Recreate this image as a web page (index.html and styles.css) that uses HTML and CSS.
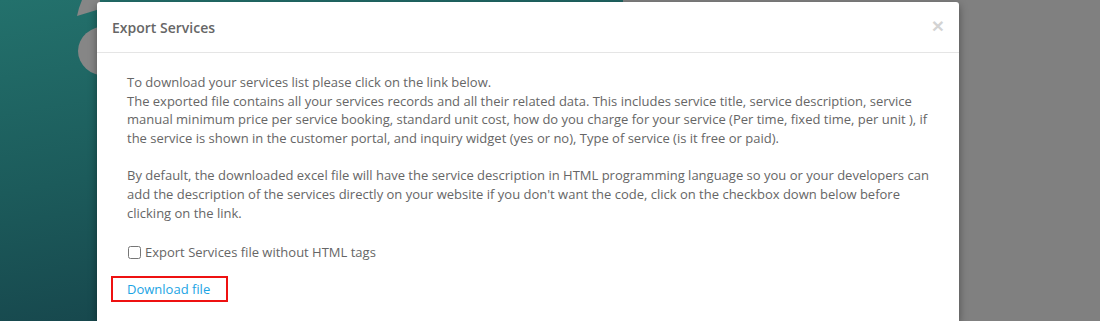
FILE: index.html
```html
<!DOCTYPE html>
<html lang="en">
<head>
    <meta charset="UTF-8">
    <meta name="viewport" content="width=device-width, initial-scale=1.0">
    <title>Export Services</title>
    <link rel="stylesheet" href="styles.css">
</head>
<body>
    <div class="backdrop">
        <div class="side-panel">
            <span class="blob blob-top"></span>
            <span class="blob blob-round"></span>
        </div>
    </div>

    <div class="modal">
        <div class="modal-header">
            <h4 class="modal-title">Export Services</h4>
            <button class="close" type="button">&times;</button>
        </div>
        <div class="modal-body">
            <p>
                To download your services list please click on the link below.<br>
                The exported file contains all your services records and all their related data. This includes service title, service description, service manual minimum price per service booking, standard unit cost, how do you charge for your service (Per time, fixed time, per unit ), if the service is shown in the customer portal, and inquiry widget (yes or no), Type of service (is it free or paid).
            </p>
            <p>
                By default, the downloaded excel file will have the service description in HTML programming language so you or your developers can add the description of the services directly on your website if you don't want the code, click on the checkbox down below before clicking on the link.
            </p>
            <label class="check-row">
                <input type="checkbox" class="check-box">
                <span>Export Services file without HTML tags</span>
            </label>
            <div class="download-box">
                <a href="#" class="download-link">Download file</a>
            </div>
        </div>
    </div>
</body>
</html>
```

FILE: styles.css
```css
* {
    box-sizing: border-box;
    margin: 0;
    padding: 0;
}

body {
    width: 1100px;
    height: 321px;
    overflow: hidden;
    position: relative;
    background-color: #808080;
    font-family: "Open Sans", Arial, sans-serif;
    font-size: 13px;
    color: #666;
}

.backdrop {
    position: absolute;
    inset: 0;
}

.side-panel {
    position: relative;
    width: 623px;
    height: 100%;
    overflow: hidden;
    background: linear-gradient(170deg, #23716c 0%, #1c5b5b 45%, #143c45 100%);
}

/* grey shapes from the page behind the overlay */
.blob {
    position: absolute;
    background-color: #868686;
}

.blob-top {
    left: 76px;
    top: 0;
    width: 24px;
    height: 16px;
    clip-path: polygon(6px 0, 24px 0, 24px 9px, 1px 16px, 3px 8px);
}

.blob-round {
    left: 78px;
    top: 26px;
    width: 56px;
    height: 50px;
    border-radius: 50%;
}

.modal {
    position: absolute;
    left: 97px;
    top: 2px;
    bottom: 0;
    width: 862px;
    background-color: #fff;
    border-radius: 3px 3px 0 0;
    box-shadow: 0 3px 9px #00000066;
}

.modal-header {
    display: flex;
    align-items: center;
    justify-content: space-between;
    height: 51px;
    padding: 0 15px;
    border-bottom: 1px solid #e5e5e5;
}

.modal-title {
    font-size: 14px;
    font-weight: 600;
    color: #666;
}

.close {
    border: none;
    background: none;
    font-family: Arial, sans-serif;
    font-size: 21px;
    font-weight: 700;
    line-height: 1;
    color: #000;
    opacity: .17;
    margin-top: -4px;
}

.modal-body {
    padding: 20px 30px 0;
    line-height: 18.6px;
}

.modal-body p {
    margin-bottom: 19px;
}

.check-row {
    display: flex;
    align-items: center;
    gap: 4px;
    margin-top: 21px;
}

.check-box {
    width: 13px;
    height: 13px;
    margin: 0 0 0 1px;
}

.download-box {
    width: 117px;
    margin: 14px 0 0 -16px;
    padding: 2px 0 2px 14px;
    border: 2px solid #ee1111;
}

.download-link {
    color: #1ba4e4;
    text-decoration: none;
}
```
